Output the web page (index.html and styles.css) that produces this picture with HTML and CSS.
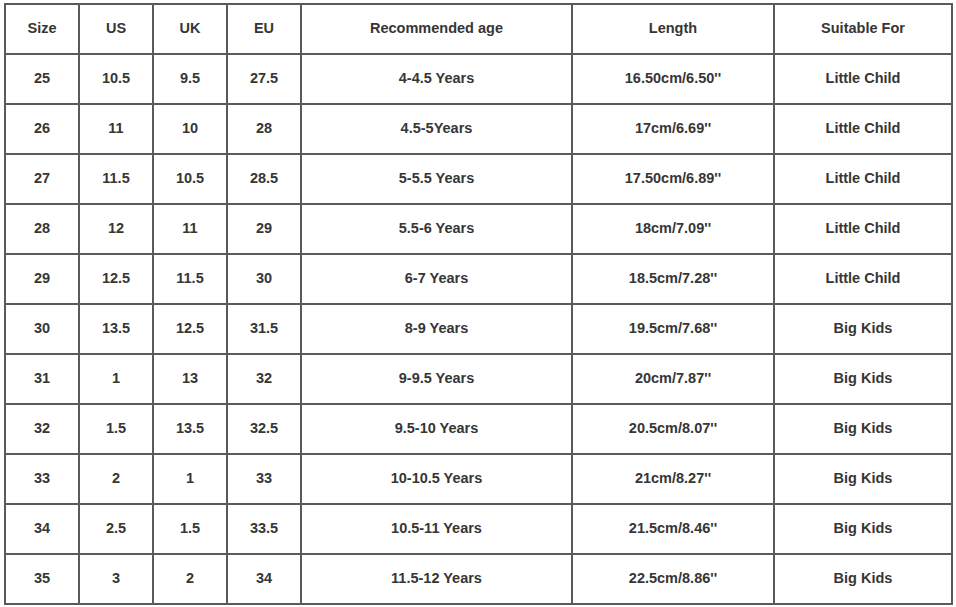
FILE: index.html
```html
<!DOCTYPE html>
<html>
<head>
<meta charset="utf-8">
<link rel="stylesheet" href="styles.css">
</head>
<body>
<div class="wrap">
<table class="size-table">
<colgroup>
<col class="c-s"><col class="c-s"><col class="c-s"><col class="c-s">
<col class="c-age"><col class="c-len"><col class="c-for">
</colgroup>
<thead>
<tr><th>Size</th><th>US</th><th>UK</th><th>EU</th><th>Recommended age</th><th>Length</th><th>Suitable For</th></tr>
</thead>
<tbody>
<tr><td>25</td><td>10.5</td><td>9.5</td><td>27.5</td><td>4-4.5 Years</td><td>16.50cm/6.50''</td><td>Little Child</td></tr>
<tr><td>26</td><td>11</td><td>10</td><td>28</td><td>4.5-5Years</td><td>17cm/6.69''</td><td>Little Child</td></tr>
<tr><td>27</td><td>11.5</td><td>10.5</td><td>28.5</td><td>5-5.5 Years</td><td>17.50cm/6.89''</td><td>Little Child</td></tr>
<tr><td>28</td><td>12</td><td>11</td><td>29</td><td>5.5-6 Years</td><td>18cm/7.09''</td><td>Little Child</td></tr>
<tr><td>29</td><td>12.5</td><td>11.5</td><td>30</td><td>6-7 Years</td><td>18.5cm/7.28''</td><td>Little Child</td></tr>
<tr><td>30</td><td>13.5</td><td>12.5</td><td>31.5</td><td>8-9 Years</td><td>19.5cm/7.68''</td><td>Big Kids</td></tr>
<tr><td>31</td><td>1</td><td>13</td><td>32</td><td>9-9.5 Years</td><td>20cm/7.87''</td><td>Big Kids</td></tr>
<tr><td>32</td><td>1.5</td><td>13.5</td><td>32.5</td><td>9.5-10 Years</td><td>20.5cm/8.07''</td><td>Big Kids</td></tr>
<tr><td>33</td><td>2</td><td>1</td><td>33</td><td>10-10.5 Years</td><td>21cm/8.27''</td><td>Big Kids</td></tr>
<tr><td>34</td><td>2.5</td><td>1.5</td><td>33.5</td><td>10.5-11 Years</td><td>21.5cm/8.46''</td><td>Big Kids</td></tr>
<tr><td>35</td><td>3</td><td>2</td><td>34</td><td>11.5-12 Years</td><td>22.5cm/8.86''</td><td>Big Kids</td></tr>
</tbody>
</table>
</div>
</body>
</html>
```
FILE: styles.css
```css
html, body {
  margin: 0;
  padding: 0;
  background: #ffffff;
}
.wrap {
  padding: 3px 0 0 4px;
}
.size-table {
  border-collapse: collapse;
  table-layout: fixed;
  width: 949px;
  font-family: "Liberation Sans", Arial, sans-serif;
  font-size: 14.5px;
  font-weight: bold;
  color: #363636;
}
.c-s { width: 74px; }
.c-age { width: 271px; }
.c-len { width: 202px; }
.c-for { width: 178px; }
.size-table th,
.size-table td {
  border: 2px solid #5a5a5a;
  height: 50px;
  padding: 0 0 3px 0;
  text-align: center;
  vertical-align: middle;
  font-weight: bold;
  box-sizing: border-box;
}
```
